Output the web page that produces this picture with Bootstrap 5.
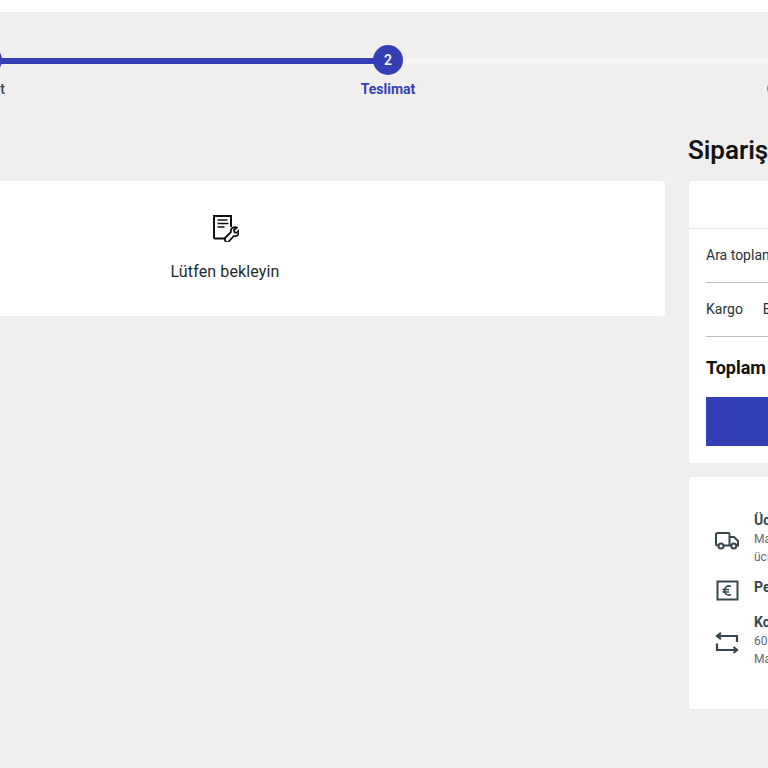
<!DOCTYPE html>
<html lang="tr">
<head>
<meta charset="utf-8">
<link rel="stylesheet" href="https://cdn.jsdelivr.net/npm/bootstrap@5.3.0/dist/css/bootstrap.min.css">
<style>
html,body{height:100%;overflow:hidden}
body{background:#fff;font-family:Roboto,"Liberation Sans",sans-serif;color:#1a1a1a}
.shell{background:#f0efee;margin-top:12px;height:756px;width:1300px;margin-left:-215px}
.stepper{height:119px;padding-top:33px;width:1200px}
.steptrack{height:30px;padding-top:13px}
.stepline{height:6px;background:#f6f5f4;width:1200px;margin-left:202px}
.stepline-on{height:6px;background:#353fb5;width:400px}
.stepdot{width:30px;height:30px;top:0;background:#353fb5;color:#fff;font-size:14px;font-weight:500}
.stepdot-a{left:187px}
.stepdot-b{left:588px}
.steplabels{margin-top:4px;height:20px}
.steplab{width:100px;text-align:center;font-size:14px;line-height:20px;font-weight:500;color:#37474f;flex:none}
.steplab-a{margin-left:152px}
.steplab-b,.steplab-c{margin-left:301px}
.steplab-on{color:#353fb5;font-weight:700}
.steplab-off{color:#552233}
.maincols{gap:24px}
.leftcol{width:880px;padding-top:50px}
.rightcol{width:380px}
.waitbox{height:135px;background:#fff;border-radius:3px;padding-top:33px}
.waittext{font-size:16px;line-height:24px;color:#1f2a30;margin-top:18px;letter-spacing:.13px}
.ordtitle{font-size:26px;font-weight:500;line-height:30px;color:#111;margin:4px 0 16px -1px;white-space:nowrap;-webkit-text-stroke:.2px #111}
.sumbox{background:#fff;border-radius:3px;height:282px}
.sumhead{height:48px;border-bottom:1px solid #e7e6e5}
.sumbody{padding:0 17px}
.sumrow{height:54px;font-size:14px;color:#263238;border-bottom:1px solid #bdbdbd;white-space:nowrap;gap:20px}
.sumtotal{height:60px;font-size:18px;font-weight:700;color:#111}
.paybtn{height:49px;background:#353fb5;border-radius:0}
.perkbox{background:#fff;border-radius:3px;margin-top:14px;height:232px;padding:33px 17px 0 26px}
.perk{gap:15px}
.perk-a{margin-bottom:12px}
.perk-b{margin-bottom:11px}
.perkicon{width:24px;flex:none}
.perkicon svg{display:block}
.perkicon-a{margin-top:5px}
.perkicon-b{margin-top:2px}
.perkicon-c{margin-top:4px}
.perktitle{font-size:14px;line-height:19px;font-weight:700;color:#37474f;white-space:nowrap}
.perktext{font-size:12px;line-height:18px;color:#5f6b72;white-space:nowrap}
.perk-a .perktitle{padding-top:1px}
</style>
</head>
<body>
<div class="shell">
  <div class="stepper">
    <div class="position-relative steptrack">
      <div class="stepline"><div class="stepline-on"></div></div>
      <div class="position-absolute rounded-circle stepdot stepdot-a"></div>
      <div class="position-absolute rounded-circle d-flex align-items-center justify-content-center stepdot stepdot-b">2</div>
    </div>
    <div class="d-flex steplabels">
      <div class="steplab steplab-a">Sepet</div>
      <div class="steplab steplab-on steplab-b">Teslimat</div>
      <div class="steplab steplab-off steplab-c">Ödeme</div>
    </div>
  </div>
  <div class="d-flex maincols">
    <div class="leftcol">
      <div class="waitbox d-flex flex-column align-items-center">
        <svg width="28" height="28" viewBox="-1 0 28 28" fill="none" stroke="#111" stroke-width="2">
          <path d="M13 24.500H3a1 1 0 0 1-1-1V2h17v11"/>
          <path d="M5.500 6h10M5.500 9.500h11M5.500 13h7" stroke-width="1.700"/>
          <path d="M12.500 24.500l6.500-6.500c-1-3 2.500-6 6-4.500l-3 2.500.5 2.300 2.300.5 2.500-2.800c1.200 3.500-2 7-5.500 6l-5.500 6c-1.800 1.200-4-1-3.300-3.500z" stroke-width="1.800" stroke-linejoin="round"/>
        </svg>
        <div class="waittext">Lütfen bekleyin</div>
      </div>
    </div>
    <div class="rightcol">
      <div class="ordtitle">Sipariş özeti</div>
      <div class="sumbox">
        <div class="sumhead"></div>
        <div class="sumbody">
          <div class="sumrow d-flex align-items-center">Ara toplam</div>
          <div class="sumrow d-flex align-items-center"><span>Kargo</span><span>Eklenecek</span></div>
          <div class="sumtotal d-flex align-items-center">Toplam</div>
          <div class="paybtn"></div>
        </div>
      </div>
      <div class="perkbox">
        <div class="d-flex align-items-center perk perk-a">
          <div class="perkicon perkicon-a"><svg width="24" height="20" viewBox="0 0 24 20" fill="none" stroke="#37474f" stroke-width="2"><path d="M3 14.500H2.500A1.500 1.500 0 0 1 1 13V3.500A1.500 1.500 0 0 1 2.500 2h11a1 1 0 0 1 1 1v11.500H9M14.500 6H19l4 4v4.500h-1.500M14.500 14.500H16"/><circle cx="6" cy="15" r="2.500"/><circle cx="18.800" cy="15" r="2.500"/></svg></div>
          <div><div class="perktitle">Ücretsiz Kargo</div><div class="perktext">Mağazadan teslim</div><div class="perktext">ücretsiz</div></div>
        </div>
        <div class="d-flex align-items-start perk perk-b">
          <div class="perkicon perkicon-b"><svg width="24" height="22" viewBox="0 0 24 22" fill="none" stroke="#37474f" stroke-width="2"><rect x="2.500" y="1.500" width="20" height="18"/><path d="M16 6.500c-3.500-1.500-6.500 .5-6.500 4s3 5.500 6.500 4M7.500 9.500h6.500M7.500 12h6.500" stroke-width="1.700"/></svg></div>
          <div class="perktitle">Peşin ödeme</div>
        </div>
        <div class="d-flex align-items-center perk">
          <div class="perkicon perkicon-c"><svg width="24" height="22" viewBox="0 0 24 22" fill="none" stroke="#37474f" stroke-width="2.200"><path d="M2 4h20v6M6 .8L2 4l4 3.200M2 11.500v6.500h20M18.500 15l3.500 3-3.500 3"/></svg></div>
          <div><div class="perktitle">Kolay iade</div><div class="perktext">60 gün içinde</div><div class="perktext">Mağazada iade</div></div>
        </div>
      </div>
    </div>
  </div>
</div>
<script src="https://cdn.jsdelivr.net/npm/bootstrap@5.3.0/dist/js/bootstrap.bundle.min.js"></script>
</body>
</html>
